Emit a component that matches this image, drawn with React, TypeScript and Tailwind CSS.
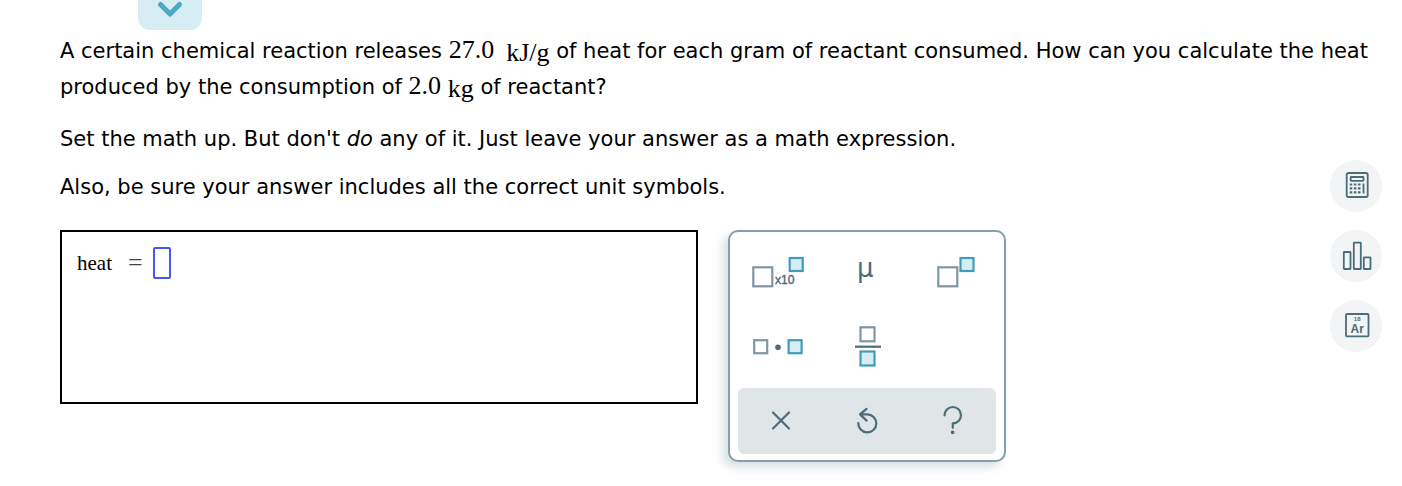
import type { ReactNode } from "react";

const SLATE = "#4b6c79";
const SLATE_LIGHT = "#7f97a2";
const TEAL = "#439cb7";
const TEAL_FILL = "#d5edf3";

// ── Math text helpers ─────────────────────────────────────────────────────────

function Num({ children }: { children: ReactNode }) {
  return (
    <span className="font-['Liberation_Serif',serif] text-[26px] leading-none">
      {children}
    </span>
  );
}

function Unit({ children }: { children: ReactNode }) {
  return (
    <span className="font-['Liberation_Serif',serif] text-[26px] leading-none align-[-3px]">
      {children}
    </span>
  );
}

// ── Palette icons ─────────────────────────────────────────────────────────────

type BoxProps = { x: number; y: number; size: number; filled?: boolean };

function Box({ x, y, size, filled }: BoxProps) {
  return (
    <rect
      x={x}
      y={y}
      width={size}
      height={size}
      fill={filled ? TEAL_FILL : "#fff"}
      stroke={filled ? TEAL : SLATE_LIGHT}
      strokeWidth="2.2"
    />
  );
}

const symbols = [
  {
    label: "Scientific notation",
    icon: (
      <>
        <Box x={15.3} y={31.3} size={19} />
        <text
          x="37"
          y="48"
          fontSize="12"
          fill={SLATE}
          stroke={SLATE}
          strokeWidth="0.4"
          fontFamily="Liberation Sans, sans-serif"
        >
          x10
        </text>
        <Box x={51.7} y={22} size={13} filled />
      </>
    ),
  },
  {
    label: "Mu",
    icon: (
      <text
        x="33"
        y="41"
        fontSize="26"
        fill={SLATE}
        fontFamily="DejaVu Sans, sans-serif"
      >
        μ
      </text>
    ),
  },
  {
    label: "Exponent",
    icon: (
      <>
        <Box x={28.3} y={31.3} size={19} />
        <Box x={50.5} y={22} size={13} filled />
      </>
    ),
  },
  {
    label: "Multiply",
    icon: (
      <>
        <Box x={16.2} y={30.2} size={13} />
        <circle cx="40" cy="37.3" r="2.8" fill={SLATE} />
        <Box x={50.6} y={30.2} size={13} filled />
      </>
    ),
  },
  {
    label: "Fraction",
    icon: (
      <>
        <Box x={36.5} y={17.3} size={14} />
        <path d="M31 36.7h26" stroke={SLATE} strokeWidth="2.2" />
        <Box x={36.5} y={41.5} size={14} filled />
      </>
    ),
  },
];

const actions = [
  { label: "Clear", icon: <path d="M35 24.5l16 16M51 24.5l-16 16" /> },
  {
    label: "Undo",
    icon: (
      <path d="M34.3 35a9 9 0 1 0 9.1-8.6H36.2M42.5 20.8L36 26.4l6.6 6.2" />
    ),
  },
  {
    label: "Help",
    icon: (
      <>
        <path d="M34.6 27.4a8.2 8.2 0 1 1 8.2 8v4.4" />
        <circle cx="42.6" cy="44.3" r="0.8" fill={SLATE} />
      </>
    ),
  },
];

function Palette() {
  return (
    <div className="w-[278px] shrink-0 rounded-[10px] border-2 border-[#879da7] bg-white px-2 pt-1 pb-1.5 shadow-[-5px_5px_10px_rgba(75,108,121,0.22)]">
      <div className="mb-1 grid grid-cols-3">
        {symbols.map((s) => (
          <button key={s.label} type="button" aria-label={s.label}>
            <svg viewBox="0 0 86 74" className="block w-full">
              {s.icon}
            </svg>
          </button>
        ))}
      </div>
      <div className="grid grid-cols-3 rounded-md bg-[#e0e5e7]">
        {actions.map((a) => (
          <button key={a.label} type="button" aria-label={a.label}>
            <svg
              viewBox="0 0 86 66"
              className="block w-full"
              fill="none"
              stroke={SLATE}
              strokeWidth="2.2"
              strokeLinecap="round"
              strokeLinejoin="round"
            >
              {a.icon}
            </svg>
          </button>
        ))}
      </div>
    </div>
  );
}

// ── Floating tools on the right ───────────────────────────────────────────────

const tools = [
  {
    label: "Calculator",
    icon: (
      <>
        <rect x="16.7" y="13" width="21" height="24" rx="1.8" />
        <rect x="20.7" y="17" width="12.8" height="3.8" rx="0.5" />
        <path
          d="M19.7 24.5h10.8M19.7 28.3h10.8M19.7 32.3h10.8"
          strokeWidth="2.2"
          strokeDasharray="2.6 1.5"
        />
        <path d="M33.5 23.5v10" />
      </>
    ),
  },
  {
    label: "Bar chart",
    icon: (
      <>
        <rect x="13.8" y="22" width="6.7" height="17" rx="0.5" />
        <rect x="23.8" y="12.7" width="7" height="26.3" rx="0.5" />
        <rect x="33.8" y="27.3" width="6.7" height="11.7" rx="0.5" />
      </>
    ),
  },
  {
    label: "Periodic table",
    icon: (
      <>
        <rect x="16" y="14" width="22.5" height="22.3" rx="1" />
        <g
          fill={SLATE}
          stroke="none"
          fontFamily="Liberation Sans, sans-serif"
          fontWeight="700"
          textAnchor="middle"
        >
          <text x="27.2" y="21.3" fontSize="6">
            18
          </text>
          <text x="27.2" y="32.5" fontSize="12">
            Ar
          </text>
        </g>
      </>
    ),
  },
];

function Toolbar() {
  return (
    <aside className="absolute top-40 right-5 flex flex-col gap-[18px]">
      {tools.map((t) => (
        <button
          key={t.label}
          type="button"
          aria-label={t.label}
          className="size-[52px] rounded-full bg-[#f2f4f6]"
        >
          <svg
            viewBox="0 0 52 52"
            className="size-full"
            fill="none"
            stroke={SLATE}
            strokeWidth="1.8"
          >
            {t.icon}
          </svg>
        </button>
      ))}
    </aside>
  );
}

// ── Page ──────────────────────────────────────────────────────────────────────

export default function App() {
  return (
    <div className="relative bg-white pr-7 pb-6 pl-[60px] font-[Verdana,'DejaVu_Sans',sans-serif] text-black">
      <button
        type="button"
        aria-label="Show more"
        className="ml-[78px] block h-[30px] w-16 rounded-b-xl bg-[#d5edf3]"
      >
        <svg viewBox="0 0 64 30" className="block w-full" fill="none">
          <path
            d="M22.5 4.5L32 14l9.5-9.5"
            stroke="#4ba8c6"
            strokeWidth="5"
            strokeLinecap="round"
            strokeLinejoin="round"
          />
        </svg>
      </button>

      <main className="pt-[3px] text-[21px] leading-9">
        <p>
          A certain chemical reaction releases <Num>27.0</Num>
          <span className="ml-3">
            <Unit>kJ/g</Unit>
          </span>{" "}
          of heat for each gram of reactant consumed. How can you calculate the
          heat produced by the consumption of <Num>2.0</Num> <Unit>kg</Unit> of
          reactant?
        </p>
        <p className="mt-4">
          Set the math up. But don't <em>do</em> any of it. Just leave your
          answer as a math expression.
        </p>
        <p className="mt-3">
          Also, be sure your answer includes all the correct unit symbols.
        </p>

        <div className="mt-[25px] flex items-start gap-[30px]">
          <div className="flex h-[174px] w-[638px] items-start border-2 border-black px-[15px] py-[15px] font-['Liberation_Serif',serif]">
            <label htmlFor="heat" className="flex items-center leading-8">
              <span className="text-[21px]">heat</span>
              <span className="ml-4 text-[26px] leading-8 text-[#444]">=</span>
            </label>
            <input
              id="heat"
              type="text"
              className="ml-2.5 h-8 w-[18px] rounded-xs border-2 border-[#4658f5] text-[21px] outline-none"
            />
          </div>
          <Palette />
        </div>
      </main>

      <Toolbar />
    </div>
  );
}
